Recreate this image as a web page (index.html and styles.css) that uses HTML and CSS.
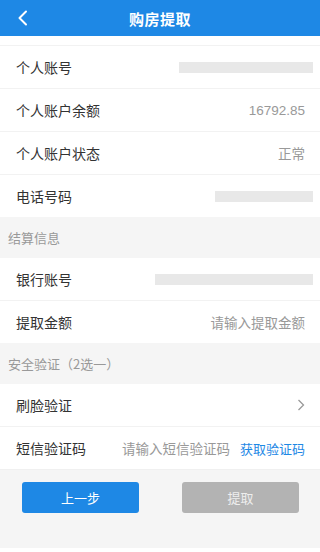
FILE: index.html
```html
<!DOCTYPE html>
<html lang="zh">
<head>
<meta charset="utf-8">
<link rel="stylesheet" href="styles.css">
</head>
<body>
<div class="app">
  <header class="topbar">
    <span class="back"><svg width="12" height="16" viewBox="0 0 12 16"><path d="M9 1.5 L2.5 8 L9 14.5" fill="none" stroke="#fff" stroke-width="2" stroke-linecap="round" stroke-linejoin="round"/></svg></span>
    <h1 class="title">购房提取</h1>
  </header>
  <div class="spacer"></div>
  <div class="list">
    <div class="row"><span class="label">个人账号</span><span class="mask mask-a"></span></div>
    <div class="row"><span class="label">个人账户余额</span><span class="value num">16792.85</span></div>
    <div class="row"><span class="label">个人账户状态</span><span class="value">正常</span></div>
    <div class="row"><span class="label">电话号码</span><span class="mask mask-b"></span></div>
  </div>
  <div class="section">结算信息</div>
  <div class="list">
    <div class="row"><span class="label">银行账号</span><span class="mask mask-c"></span></div>
    <div class="row"><span class="label">提取金额</span><span class="value">请输入提取金额</span></div>
  </div>
  <div class="section">安全验证（2选一）</div>
  <div class="list">
    <div class="row"><span class="label">刷脸验证</span><span class="chev"><svg width="8" height="12" viewBox="0 0 8 12"><path d="M1.5 1 L6.5 6 L1.5 11" fill="none" stroke="#999" stroke-width="1.3"/></svg></span></div>
    <div class="row"><span class="label">短信验证码</span><span class="sms"><span class="value">请输入短信验证码</span><span class="link">获取验证码</span></span></div>
  </div>
  <div class="actions">
    <button class="btn btn-primary">上一步</button>
    <button class="btn btn-disabled">提取</button>
  </div>
</div>
</body>
</html>
```
FILE: styles.css
```css
* { box-sizing: border-box; }
html, body { margin: 0; padding: 0; background: #fff; }
body { font-family: "Noto Sans CJK SC", "Noto Sans", sans-serif; width: 320px; height: 552px; overflow: hidden; }
.app { display: flex; flex-direction: column; }
.topbar {
  height: 36px; background: #1e88e5; display: flex; align-items: center; justify-content: center; position: relative;
}
.back { position: absolute; left: 17px; top: 10px; display: flex; }
.title { margin: 0; color: #fff; font-size: 15px; font-weight: 700; letter-spacing: 0.5px; }
.spacer { height: 10px; border-bottom: 1px solid #f2f2f2; }
.list { display: flex; flex-direction: column; }
.row {
  height: 43px; border-bottom: 1px solid #f2f2f2; display: flex; align-items: center; justify-content: space-between;
  padding: 0 15px 0 16px;
}
.row:last-child { border-bottom: none; height: 42px; }
.label { font-size: 14px; color: #333; }
.value { font-size: 13.5px; color: #999; }
.num { font-family: "Liberation Sans", "Noto Sans CJK SC", sans-serif; font-size: 13.5px; }
.mask { height: 11px; background: #e8e8e8; display: block; margin-right: -8px; }
.mask-a { width: 134px; }
.mask-b { width: 98px; }
.mask-c { width: 158px; }
.chev { display: flex; margin-right: 0; }
.sms { display: flex; align-items: center; gap: 10px; }
.link { font-size: 13px; color: #1e88e5; }
.section {
  height: 41px; background: #f5f5f5; display: flex; align-items: center; padding-left: 8px;
  font-size: 13px; color: #999;
}
.actions {
  height: 79px; background: #f5f5f5; display: flex; justify-content: space-between; align-items: flex-start;
  padding: 12px 21px 0 22px; border-top: 1px solid #f0f0f0;
}
.btn {
  width: 117px; height: 31px; border: none; border-radius: 3px; font-family: inherit; font-size: 13px; color: #fff;
}
.btn-primary { background: #1e88e5; }
.btn-disabled { background: #b3b3b3; color: #eee; }
```
